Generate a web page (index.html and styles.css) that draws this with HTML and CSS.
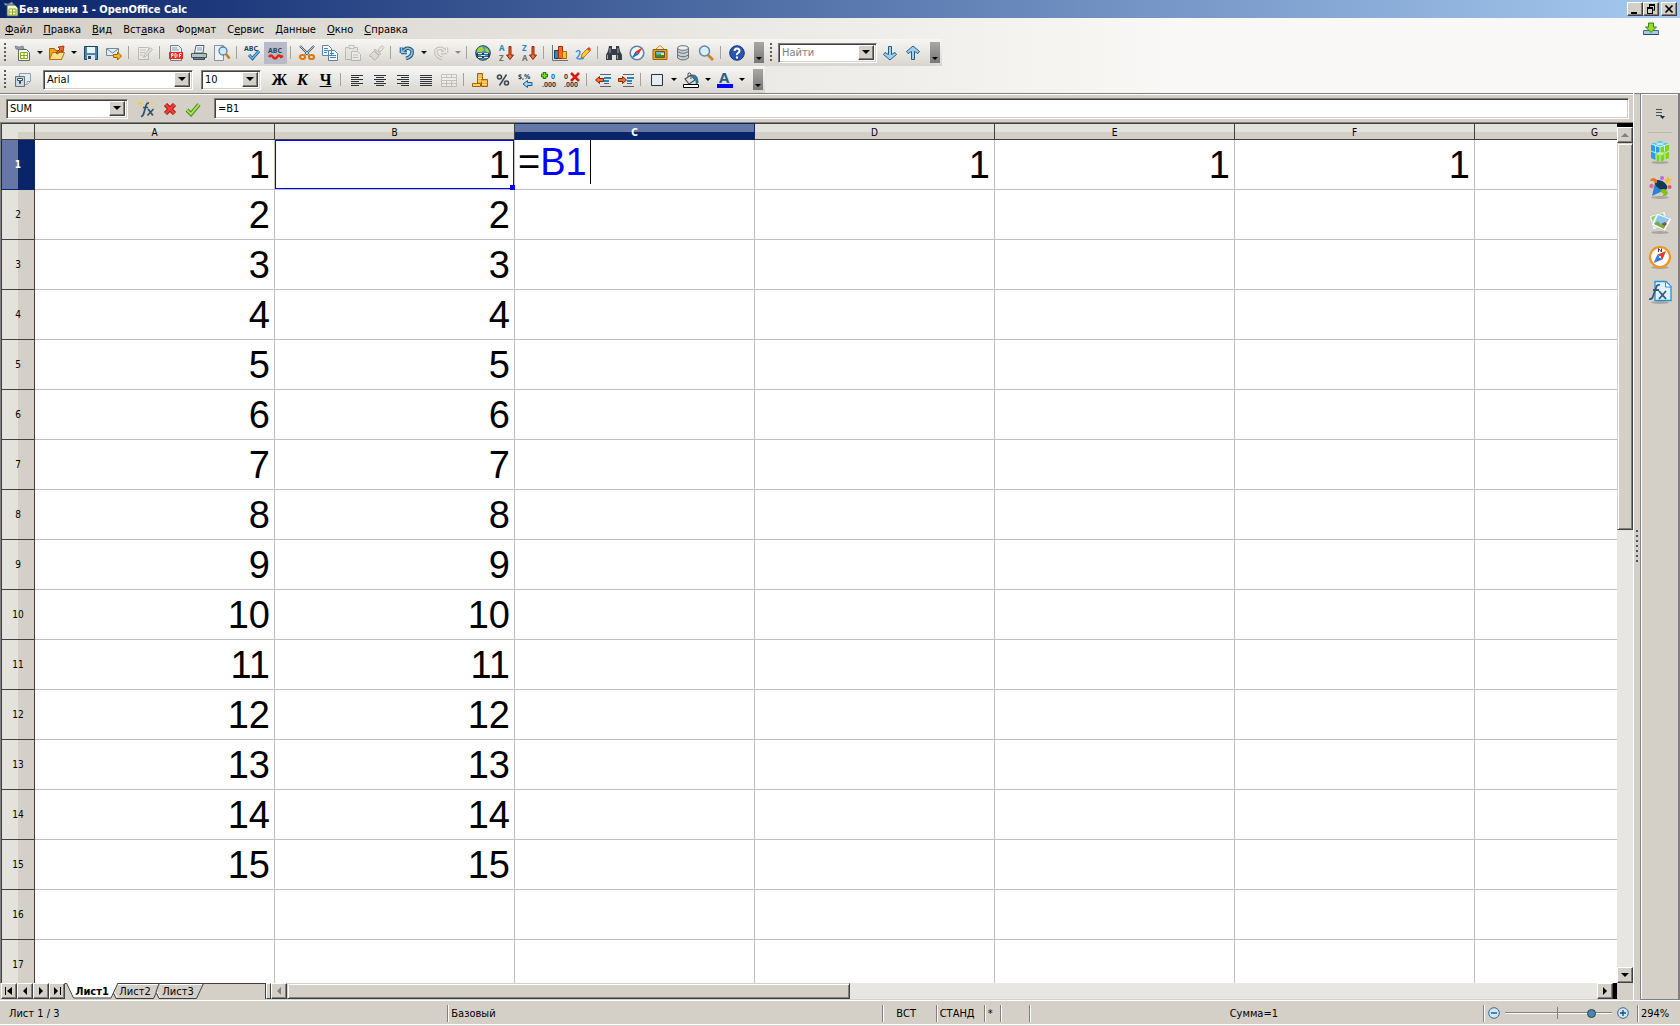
FILE: index.html
```html
<!DOCTYPE html>
<html lang="ru">
<head>
<meta charset="utf-8">
<title>Без имени 1 - OpenOffice Calc</title>
<link rel="stylesheet" href="styles.css">
</head>
<body>
<header class="titlebar">
  <svg class="icon" viewBox="0 0 16 16"><path d="M1 2l4 1 4-2 2 3-5 1-4-1z" fill="#9fb4c0" stroke="#476" stroke-width=".6"/><path d="M4 4h8l3 3v8H4z" fill="#f4f8d8" stroke="#455"/><path d="M6 8h7v6H6zM6 11h7M9.500 8v6" fill="#fff" stroke="#8ab000"/></svg>
  <h1>Без имени 1 - OpenOffice Calc</h1>
  <div class="window-buttons">
    <button class="winbtn" aria-label="Свернуть"><svg viewBox="0 0 12 10"><path d="M2 8h6v2H2z"/></svg></button>
    <button class="winbtn" aria-label="Восстановить"><svg viewBox="0 0 12 10"><path d="M4 1h6M4.500 0v4M9.500 0v6.500M8 6h2M2 4h6M2.500 4v5.500M7.500 4v5.500M2 9.500h6" fill="none" stroke="#000" /><path d="M4 0h6v2H4zM2 3h6v2H2z"/></svg></button>
    <button class="winbtn close" aria-label="Закрыть"><svg viewBox="0 0 12 10"><path d="M2.500 1.500l7 7M9.500 1.500l-7 7" stroke="#000" stroke-width="1.700"/></svg></button>
  </div>
</header>

<div class="chrome">
  <nav class="menubar">
    <button><u>Ф</u>айл</button><button><u>П</u>равка</button><button><u>В</u>ид</button><button>Вст<u>а</u>вка</button><button>Фо<u>р</u>мат</button><button>С<u>е</u>рвис</button><button><u>Д</u>анные</button><button><u>О</u>кно</button><button><u>С</u>правка</button>
    <button class="update" aria-label="Обновление"><svg class="icon" viewBox="0 0 16 16"><path d="M.5 8.500h15v4H.5z" fill="#a9c9e2" stroke="#456a8c"/><path d="M.5 12.500h15" stroke="#2d4558"/><path d="M5.500 1h5v4h3L8 10.500 2.500 5h3z" fill="#9ad82c" stroke="#2f8a10"/></svg></button>
  </nav>

  <div class="toolrow">
    <div class="toolbar">
      <i class="grip"></i>
      <button class="tool" aria-label="Создать"><svg class="icon" viewBox="0 0 16 16"><path d="M0 1l4 1 4-1 1 3-4 1-4-1z" fill="#8fa3ad" stroke="#567" stroke-width=".6"/><path d="M3.500 4.500h8l3 3v8h-11z" fill="#f6f9e4" stroke="#5a686e"/><path d="M5.500 7.500h7v6h-7zM5.500 10.500h7M9 7.500v6" fill="#fff" stroke="#85ad00"/></svg></button>
      <button class="drop" aria-label="Список"></button>
      <button class="tool" aria-label="Открыть"><svg class="icon" viewBox="0 0 16 16"><path d="M.5 14.500v-11h5l1 2h6v9z" fill="#f0a41c" stroke="#a46400"/><path d="M.5 14.500l3-7h12l-3 7z" fill="#ffe08a" stroke="#b87400"/><path d="M7 8l4-4-2-2 6-1-1 6-2-1.500L8.500 9z" fill="#f06428" stroke="#96200a" stroke-width=".8"/></svg></button>
      <button class="drop" aria-label="Список"></button>
      <button class="tool" aria-label="Сохранить"><svg class="icon" viewBox="0 0 16 16"><path d="M1.500 1.500h13v13h-13z" fill="#4787ad" stroke="#1e4560"/><path d="M4 2h8v6H4z" fill="#eef4f6"/><path d="M4 10h8v5H4z" fill="#dce6ea"/><path d="M5 11h3v3H5z" fill="#26485c"/></svg></button>
      <button class="tool" aria-label="Отправить"><svg class="icon" viewBox="0 0 16 16"><path d="M.5 3.500h12v7H.5z" fill="#e2ebf1" stroke="#748896"/><path d="M1 4l5.500 4L12 4" fill="none" stroke="#748896"/><path d="M7.500 9.500h4v-2.500l4 4-4 4v-2.500h-4z" fill="#fbb823" stroke="#a86400"/></svg></button>
      <i class="sep"></i>
      <button class="tool" disabled aria-label="Правка файла"><svg class="icon faded" viewBox="0 0 16 16"><path d="M1.500 2.500h10v12h-10z" fill="#eee" stroke="#777"/><path d="M3 5h6M3 7.500h5M3 10h3" stroke="#888"/><path d="M6.500 12.500l1-3 6-7 2 2-6 6.500z" fill="#ccc" stroke="#777"/></svg></button>
      <i class="sep"></i>
      <button class="tool" aria-label="Экспорт в PDF"><svg class="icon" viewBox="0 0 16 16"><path d="M2.500.5h8l3 3v12h-11z" fill="#e9f0f5" stroke="#697d8a"/><path d="M4 3h5M4 5h7" stroke="#8ca0b0"/><path d="M1 7h14v7H1z" fill="#e22b1c"/><path d="M3.500 12.500v-4h1.500v2H3.500M7 8.500h1l1 1v2l-1 1H7zM11.500 12.500v-4h2M11.500 10.500h1.500" fill="none" stroke="#fff"/></svg></button>
      <button class="tool" aria-label="Печать"><svg class="icon" viewBox="0 0 16 16"><path d="M3.500 8L5 .5h8L12 8z" fill="#eef5fa" stroke="#50616c"/><path d="M6 3h5M6 5h5" stroke="#849cae"/><path d="M.5 8.500h15v4H.5z" fill="#b5c1c8" stroke="#45545e"/><path d="M2.500 12.500h11v2h-11z" fill="#718089" stroke="#3c4850"/><path d="M11 10.500h3" stroke="#8ee000"/></svg></button>
      <button class="tool" aria-label="Предпросмотр"><svg class="icon" viewBox="0 0 16 16"><path d="M.5.500h9v15h-9z" fill="#eef2f6" stroke="#8292a0"/><circle cx="9" cy="6" r="4" fill="#cce8fa" stroke="#58809c" stroke-width="1.300"/><path d="M12 9l3.500 4.500" stroke="#c67d14" stroke-width="2.500"/></svg></button>
      <i class="sep"></i>
      <button class="tool" aria-label="Проверка орфографии"><svg class="icon" viewBox="0 0 16 16"><text x="-1" y="6" class="abc">ABC</text><path d="M4 10l3.500 3.500L14 6" fill="none" stroke="#185b8c" stroke-width="3"/><path d="M4 10l3.500 3.500L14 6" fill="none" stroke="#68b6ec" stroke-width="1.500"/></svg></button>
      <button class="tool pressed" aria-label="Автопроверка"><svg class="icon" viewBox="0 0 16 16"><text x="0" y="8" class="abc">ABC</text><path d="M1 12q2-3 4 0t4 0 4 0l2-1" fill="none" stroke="#e02418" stroke-width="2.500"/></svg></button>
      <i class="sep"></i>
      <button class="tool" aria-label="Вырезать"><svg class="icon" viewBox="0 0 16 16"><path d="M1 1l9 9M15 1l-9 9" stroke="#4b5c66" stroke-width="2.200"/><path d="M1 1l9 9M15 1l-9 9" stroke="#d8e2e8" stroke-width=".8"/><ellipse cx="3.500" cy="12" rx="2.500" ry="2" fill="#eee" stroke="#dc7808" stroke-width="2.200"/><ellipse cx="12.500" cy="12" rx="2.500" ry="2" fill="#eee" stroke="#dc7808" stroke-width="2.200"/></svg></button>
      <button class="tool" aria-label="Копировать"><svg class="icon" viewBox="0 0 16 16"><path d="M.5.500h6l3 3v7h-9zM6.500 5.500h6l3 3v7h-9z" fill="#f3f8fc" stroke="#6280a0"/><path d="M2 3.500h4M2 5.500h4M2 7.500h3M8 8.500h4M8 10.500h6M8 12.500h6" stroke="#3c83c0"/></svg></button>
      <button class="tool" disabled aria-label="Вставить"><svg class="icon faded" viewBox="0 0 16 16"><path d="M.5 2.500h12v12H.5z" fill="#ddd" stroke="#777"/><path d="M4 .5h5v3H4z" fill="#eee" stroke="#777"/><path d="M6.500 6.500h6l3 3v6h-9z" fill="#f4f4f4" stroke="#777"/><path d="M8 10h5M8 12.500h5" stroke="#888"/></svg></button>
      <button class="tool" disabled aria-label="Кисть"><svg class="icon faded" viewBox="0 0 16 16"><path d="M10 5l4-4.500 2 2L12 7z" fill="#ddd" stroke="#777"/><path d="M7 4l6 5-2 1-5-5zM6 6l5 5-4 4-2-1-1-2-3-1z" fill="#ccc" stroke="#777"/></svg></button>
      <i class="sep"></i>
      <button class="tool" aria-label="Отменить"><svg class="icon" viewBox="0 0 16 16"><path d="M2 7.500h6M2.500 2.500V8M3 7l4-3.500q4-1 6 2 1 6-6 8" fill="none" stroke="#1d5276" stroke-width="3.600"/><path d="M2 7.500h6M2.500 2.500V8M3 7l4-3.500q4-1 6 2 1 6-6 8" fill="none" stroke="#8cc4e6" stroke-width="1.500"/></svg></button>
      <button class="drop" aria-label="Список"></button>
      <button class="tool" disabled aria-label="Вернуть"><svg class="icon faded" viewBox="0 0 16 16"><path d="M14 7.500H8M13.500 2.500V8M13 7L9 3.500q-4-1-6 2-1 6 6 8" fill="none" stroke="#777" stroke-width="3.400"/><path d="M14 7.500H8M13.500 2.500V8M13 7L9 3.500q-4-1-6 2-1 6 6 8" fill="none" stroke="#eee" stroke-width="1.500"/></svg></button>
      <button class="drop" disabled aria-label="Список"></button>
      <i class="sep"></i>
      <button class="tool" aria-label="Гиперссылка"><svg class="icon" viewBox="0 0 16 16"><circle cx="8" cy="8" r="7.300" fill="#4f9cc8" stroke="#1d4763"/><path d="M3 3l4-1.500 2 3-3 3-4-1zM10 3l3 1 1 4-3-1z" fill="#a8d432"/><rect x="2" y="8.500" width="6" height="4" rx="2" fill="none" stroke="#26404e" stroke-width="2"/><rect x="8" y="8.500" width="6" height="4" rx="2" fill="none" stroke="#26404e" stroke-width="2"/><path d="M3 8.500h4M9 8.500h4M3 12.500h4M9 12.500h4M6 10.500h4" stroke="#d7e9ee"/></svg></button>
      <button class="tool" aria-label="Сортировка по возрастанию"><svg class="icon" viewBox="0 0 16 16"><text x="1" y="6" class="letter blue">A</text><text x="1" y="16" class="letter grey">Z</text><path d="M11 1.500h2V10h2.500L12 14.500 8.500 10H11z" fill="#f56b30" stroke="#8d2206"/></svg></button>
      <button class="tool" aria-label="Сортировка по убыванию"><svg class="icon" viewBox="0 0 16 16"><text x="1" y="6" class="letter blue">Z</text><text x="1" y="16" class="letter grey">A</text><path d="M11 1.500h2V10h2.500L12 14.500 8.500 10H11z" fill="#f56b30" stroke="#8d2206"/></svg></button>
      <i class="sep"></i>
      <button class="tool" aria-label="Диаграмма"><svg class="icon" viewBox="0 0 16 16"><path d="M.5 0v15.500H16" fill="none" stroke="#68737c"/><path d="M2.500 5.500h4v8h-4z" fill="#3486b4" stroke="#173e58"/><path d="M6.500 1.500h4v12h-4z" fill="#ff6a20" stroke="#a32600"/><path d="M10.500 6.500h4v7h-4z" fill="#ffc13c" stroke="#ad6900"/></svg></button>
      <button class="tool" aria-label="Рисование"><svg class="icon" viewBox="0 0 16 16"><path d="M1 7q3-3 4 0 0 3-3 6 3 2 7 0" fill="none" stroke="#3f92dc" stroke-width="1.600"/><path d="M6 13l1-4 6-6 2.500 2.500L9 12z" fill="#ffcb38" stroke="#a26300" stroke-width=".8"/><path d="M12 4l2-2 2 2-2 2z" fill="#e83a34"/></svg></button>
      <i class="sep"></i>
      <button class="tool" aria-label="Найти и заменить"><svg class="icon" viewBox="0 0 16 16"><path d="M3 1h3v3h4V1h3l1 5 2 4v5h-6v-5H6v5H0v-5l2-4z" fill="#363d44"/><path d="M1.500 10v4M11.500 10v4M4 3v5M12 3v5" stroke="#9aa5ae"/></svg></button>
      <button class="tool" aria-label="Навигатор"><svg class="icon" viewBox="0 0 16 16"><circle cx="8" cy="8" r="6.800" fill="#f3f8fc" stroke="#66839e" stroke-width="1.600"/><path d="M13.500 2.500L9.500 9.500 6.500 6.500z" fill="#e72d20"/><path d="M2.500 13.500l7-4-3-3z" fill="#1b6fc6"/></svg></button>
      <button class="tool" aria-label="Галерея"><svg class="icon" viewBox="0 0 16 16"><path d="M4 4l4-3.500L12 4" fill="none" stroke="#d28910"/><path d="M1 4.500h14v10H1z" fill="#eea52a" stroke="#9a5b00"/><path d="M3.500 6.500h9v6h-9z" fill="#69b4e7" stroke="#5a5634"/><path d="M4 12V9l2 1 3-1 3 1v2z" fill="#3d8d28"/><path d="M9 8h3v2H9z" fill="#f7e269"/></svg></button>
      <button class="tool" aria-label="Источники данных"><svg class="icon" viewBox="0 0 16 16"><path d="M2.500 3v10q5.500 4 11 0V3" fill="#c6ced4" stroke="#66727c"/><ellipse cx="8" cy="3" rx="5.500" ry="2.300" fill="#edf1f3" stroke="#66727c"/><path d="M2.500 6.500q5.500 3.500 11 0M2.500 10q5.500 3.500 11 0" fill="none" stroke="#66727c"/></svg></button>
      <button class="tool" aria-label="Масштаб"><svg class="icon" viewBox="0 0 16 16"><path d="M10 10l5 5" stroke="#d08215" stroke-width="2.800"/><circle cx="6.500" cy="6" r="5" fill="#d8effc" stroke="#6486a4" stroke-width="1.500"/></svg></button>
      <i class="sep"></i>
      <button class="tool" aria-label="Справка"><svg class="icon" viewBox="0 0 16 16"><circle cx="8" cy="8" r="7.300" fill="#2756ae" stroke="#163678"/><path d="M5.500 6q0-2.500 2.500-2.500T10.500 6q0 1-1.500 2T8 10M8 11.500v2" fill="none" stroke="#fff" stroke-width="2"/></svg></button>
      <button class="overflow" aria-label="Ещё"></button>
    </div>
    <div class="toolbar">
      <i class="grip"></i>
      <div class="combo find"><input type="text" placeholder="Найти" aria-label="Найти"><button class="arrow" aria-label="Список"></button></div>
      <button class="tool" aria-label="Найти далее"><svg class="icon" viewBox="0 0 16 16"><path d="M6.500 1.500h3v8l3.500-2 1.500 2L8 15 1.500 9.500 3 7.500l3.500 2z" fill="#9fcfec" stroke="#2b5d7e"/></svg></button>
      <button class="tool" aria-label="Найти ранее"><svg class="icon" viewBox="0 0 16 16"><path d="M6.500 14.500h3v-8l3.500 2 1.500-2L8 1 1.500 6.500 3 8.500l3.500-2z" fill="#9fcfec" stroke="#2b5d7e"/></svg></button>
      <button class="overflow spaced" aria-label="Ещё"></button>
    </div>
  </div>

  <div class="toolrow">
    <div class="toolbar">
      <i class="grip"></i>
      <button class="tool" aria-label="Стили"><svg class="icon" viewBox="0 0 16 16"><path d="M4.500 1.500h11v8l-3 3h-8z" fill="#e2ecf2" stroke="#91a0ab"/><path d="M15 9.500h-3v3" fill="#fff" stroke="#91a0ab"/><path d="M.5 4.500h9v10h-9z" fill="#cdd9e0" stroke="#60717d"/><path d="M2.500 6.500h5v2h-2v3h-1v-3h-2z" fill="#fff" stroke="#394b56"/></svg></button>
      <div class="combo fontname"><select aria-label="Шрифт"><option>Arial</option></select><span class="arrow"></span></div>
      <div class="combo fontsize"><select aria-label="Размер"><option>10</option></select><span class="arrow"></span></div>
      <button class="tool letterbtn">Ж</button>
      <button class="tool letterbtn italic">К</button>
      <button class="tool letterbtn under">Ч</button>
      <i class="sep"></i>
      <button class="tool" aria-label="По левому краю"><svg class="icon" viewBox="0 0 16 16"><path d="M2 3.500h12M2 5.500h8M2 7.500h12M2 9.500h8M2 11.500h12M2 13.500h8" stroke="#2b3338"/></svg></button>
      <button class="tool" aria-label="По центру"><svg class="icon" viewBox="0 0 16 16"><path d="M2 3.500h12M4 5.500h8M2 7.500h12M4 9.500h8M2 11.500h12M4 13.500h8" stroke="#2b3338"/></svg></button>
      <button class="tool" aria-label="По правому краю"><svg class="icon" viewBox="0 0 16 16"><path d="M2 3.500h12M6 5.500h8M2 7.500h12M6 9.500h8M2 11.500h12M6 13.500h8" stroke="#2b3338"/></svg></button>
      <button class="tool" aria-label="По ширине"><svg class="icon" viewBox="0 0 16 16"><path d="M2 3.500h12M2 5.500h12M2 7.500h12M2 9.500h12M2 11.500h12M2 13.500h12" stroke="#2b3338"/></svg></button>
      <button class="tool" disabled aria-label="Объединить ячейки"><svg class="icon faded" viewBox="0 0 16 16"><path d="M.5 2.500h15v12H.5zM.5 5.500h15M.5 8.500h15M.5 11.500h15M5.500 2.500v3M10.500 2.500v3M5.500 8.500v6M10.500 8.500v6" fill="#f6f6f6" stroke="#888"/></svg></button>
      <i class="sep"></i>
      <button class="tool" aria-label="Денежный формат"><svg class="icon" viewBox="0 0 16 16"><path d="M5.500 1.500h5v11h-5z" fill="#f5ac2c" stroke="#a66200"/><path d="M9.500 7.500h6v7h-6z" fill="#f5ac2c" stroke="#a66200"/><path d="M.5 11.500h8v3h-8z" fill="#ffd160" stroke="#a66200"/><path d="M6 4h4M6 6.500h4M6 9h4M10 10h5M10 12.500h5" stroke="#ffe49a"/></svg></button>
      <button class="tool" aria-label="Процентный формат"><svg class="icon" viewBox="0 0 16 16"><circle cx="4.500" cy="5" r="2" fill="none" stroke="#3b4750" stroke-width="1.600"/><circle cx="11.500" cy="11" r="2" fill="none" stroke="#3b4750" stroke-width="1.600"/><path d="M11.500 2.500l-7 11" stroke="#3b4750" stroke-width="1.500"/></svg></button>
      <button class="tool" aria-label="Стандартный формат"><svg class="icon" viewBox="0 0 16 16"><text x="0" y="7" class="abc">$,%</text><path d="M9.500 15.500L5 12l4.500-3.500v2H14v3H9.500z" fill="#9dd3f4" stroke="#1e5d87"/></svg></button>
      <button class="tool" aria-label="Добавить разряд"><svg class="icon" viewBox="0 0 16 16"><path d="M3.500 0v7M0 3.500h7" stroke="#287b0c" stroke-width="3.500"/><path d="M3.500 1v5M1 3.500h5" stroke="#7bdd2e" stroke-width="1.500"/><text x="10" y="7" class="tiny bluefill">0</text><text x="1" y="15" class="tiny">.000</text></svg></button>
      <button class="tool" aria-label="Удалить разряд"><svg class="icon" viewBox="0 0 16 16"><text x="0" y="7" class="tiny">0</text><text x="0" y="15" class="tiny">.000</text><path d="M7 1l8 8M15 1L7 9" stroke="#d31c14" stroke-width="2.500"/></svg></button>
      <i class="sep"></i>
      <button class="tool" aria-label="Уменьшить отступ"><svg class="icon" viewBox="0 0 16 16"><path d="M5 2.500h11M5 14.500h11M9 11.500h5" stroke="#59636b"/><path d="M9 6h7M9 9h5" stroke="#2186c6" stroke-width="2"/><path d="M4.500 11.500L.5 8l4-3.500v2h4v3h-4z" fill="#ef6c34" stroke="#8f2408"/></svg></button>
      <button class="tool" aria-label="Увеличить отступ"><svg class="icon" viewBox="0 0 16 16"><path d="M5 2.500h11M5 14.500h11M9 11.500h5" stroke="#59636b"/><path d="M9 6h7M9 9h5" stroke="#2186c6" stroke-width="2"/><path d="M4.500 4.500l4 3.500-4 3.500v-2H.5v-3h4z" fill="#ef6c34" stroke="#8f2408"/></svg></button>
      <i class="sep"></i>
      <button class="tool" aria-label="Обрамление"><svg class="icon" viewBox="0 0 16 16"><path d="M2.500 2.500h11v11h-11z" fill="#e4edf5" stroke="#26323a"/></svg></button>
      <button class="drop" aria-label="Список"></button>
      <button class="tool" aria-label="Цвет фона"><svg class="icon" viewBox="0 0 16 16"><path d="M9 3q6-1 6 8l-2 .5V8z" fill="#2e80b9" stroke="#204d6c" stroke-width=".7"/><path d="M2 7l6-4 4 5-6 4z" fill="#d7e1e7" stroke="#42515a" stroke-width="1.200"/><path d="M5 5V1.500q2-2 3 1V7" fill="none" stroke="#42515a"/><path d="M.5 12.500h15v3H.5z" fill="#fff" stroke="#000"/></svg></button>
      <button class="drop" aria-label="Список"></button>
      <button class="tool" aria-label="Цвет символов"><svg class="icon" viewBox="0 0 16 16"><text x="2" y="11" class="fontcolor">A</text><path d="M0 12h16v4H0z" fill="#00f"/></svg></button>
      <button class="drop" aria-label="Список"></button>
      <button class="overflow" aria-label="Ещё"></button>
    </div>
  </div>
</div>

<main class="workspace">
  <section class="document">
    <div class="formulabar">
      <div class="combo namebox"><input type="text" value="SUM" aria-label="Область листа"><button class="arrow" aria-label="Список"></button></div>
      <div class="formula-tools">
      <button class="tool" aria-label="Мастер функций"><svg class="icon" viewBox="0 0 16 16"><path d="M2 15.500q2 0 3-4l2-7Q8 1.500 10 2M4 6.500h5M9 8l5 6.500M14.500 8l-6 6.500" fill="none" stroke="#31516a" stroke-width="1.700"/><path d="M1 0v5M-1.500 2.500h5M8-.5v2M13 1v3M14.500 5h2" stroke="#ffc62e" stroke-width="1.200"/></svg></button>
      <button class="tool" aria-label="Отменить"><svg class="icon" viewBox="0 0 16 16"><path d="M3.500 3.500l9 9M12.500 3.500l-9 9" stroke="#a30e0e" stroke-width="4.500"/><path d="M3.500 3.500l9 9M12.500 3.500l-9 9" stroke="#ee4038" stroke-width="2.500"/></svg></button>
      <button class="tool" aria-label="Принять"><svg class="icon" viewBox="0 0 16 16"><path d="M2 9l4 4 8-9.500" fill="none" stroke="#3d8a12" stroke-width="4"/><path d="M2 9l4 4 8-9.500" fill="none" stroke="#a8e04c" stroke-width="2"/></svg></button>
      </div>
      <input class="formula" type="text" value="=B1" aria-label="Строка ввода">
    </div>

    <div class="sheetarea">
      <div class="grid">
        <table>
          <colgroup><col class="rowcol"><col><col><col><col><col><col><col></colgroup>
          <thead><tr><th class="corner"></th><th>A</th><th>B</th><th class="active">C</th><th>D</th><th>E</th><th>F</th><th>G</th></tr></thead>
          <tbody>
          <tr><th class="active">1</th><td>1</td><td class="ref">1<i class="handle"></i></td><td class="editing">=<span>B1</span><i class="caret"></i></td><td>1</td><td>1</td><td>1</td><td></td></tr>
          <tr><th>2</th><td>2</td><td>2</td><td></td><td></td><td></td><td></td><td></td></tr>
          <tr><th>3</th><td>3</td><td>3</td><td></td><td></td><td></td><td></td><td></td></tr>
          <tr><th>4</th><td>4</td><td>4</td><td></td><td></td><td></td><td></td><td></td></tr>
          <tr><th>5</th><td>5</td><td>5</td><td></td><td></td><td></td><td></td><td></td></tr>
          <tr><th>6</th><td>6</td><td>6</td><td></td><td></td><td></td><td></td><td></td></tr>
          <tr><th>7</th><td>7</td><td>7</td><td></td><td></td><td></td><td></td><td></td></tr>
          <tr><th>8</th><td>8</td><td>8</td><td></td><td></td><td></td><td></td><td></td></tr>
          <tr><th>9</th><td>9</td><td>9</td><td></td><td></td><td></td><td></td><td></td></tr>
          <tr><th>10</th><td>10</td><td>10</td><td></td><td></td><td></td><td></td><td></td></tr>
          <tr><th>11</th><td>11</td><td>11</td><td></td><td></td><td></td><td></td><td></td></tr>
          <tr><th>12</th><td>12</td><td>12</td><td></td><td></td><td></td><td></td><td></td></tr>
          <tr><th>13</th><td>13</td><td>13</td><td></td><td></td><td></td><td></td><td></td></tr>
          <tr><th>14</th><td>14</td><td>14</td><td></td><td></td><td></td><td></td><td></td></tr>
          <tr><th>15</th><td>15</td><td>15</td><td></td><td></td><td></td><td></td><td></td></tr>
          <tr><th>16</th><td></td><td></td><td></td><td></td><td></td><td></td><td></td></tr>
          <tr><th>17</th><td></td><td></td><td></td><td></td><td></td><td></td><td></td></tr>
          </tbody>
        </table>
      </div>
      <div class="vscroll">
        <i class="split"></i>
        <button class="scrollbtn" aria-label="Вверх"><svg viewBox="0 0 10 10"><path d="M1 7h8L5 3z" fill="#808080"/></svg></button>
        <div class="track"><div class="thumb"></div></div>
        <button class="scrollbtn" aria-label="Вниз"><svg viewBox="0 0 10 10"><path d="M1 3h8L5 7z"/></svg></button>
      </div>
    </div>

    <div class="bottombar">
      <div class="sheets">
        <button class="navbtn" aria-label="Первый лист"><svg viewBox="0 0 10 10"><path d="M1 1h1v8H1zM8 1v8L3 5z"/></svg></button>
        <button class="navbtn" aria-label="Предыдущий лист"><svg viewBox="0 0 10 10"><path d="M7 1v8L3 5z"/></svg></button>
        <button class="navbtn" aria-label="Следующий лист"><svg viewBox="0 0 10 10"><path d="M3 1v8l4-4z"/></svg></button>
        <button class="navbtn" aria-label="Последний лист"><svg viewBox="0 0 10 10"><path d="M2 1v8l4-4zM8 1h1v8H8z"/></svg></button>
        <div class="tabs">
          <button class="tab current"><svg viewBox="0 0 52 16"><path d="M0 0l7 15h38l7-15z" fill="#fff"/><path d="M.5 0l7 15H45l7-15" fill="none" stroke="#404040"/></svg><span>Лист1</span></button>
          <button class="tab"><svg viewBox="0 0 52 16"><path d="M7 .5h44.500l-7 15H7L4 9z" fill="#d4d0c8" stroke="#404040"/><path d="M8 1.500h42M5 9l3 5" stroke="#fff"/></svg><span>Лист2</span></button>
          <button class="tab"><svg viewBox="0 0 52 16"><path d="M7 .5h44.500l-7 15H7L4 9z" fill="#d4d0c8" stroke="#404040"/><path d="M8 1.500h42M5 9l3 5" stroke="#fff"/></svg><span>Лист3</span></button>
        </div>
      </div>
      <i class="hsplit"></i>
      <div class="hscroll">
        <button class="scrollbtn" aria-label="Влево"><svg viewBox="0 0 10 10"><path d="M7 1v8L3 5z" fill="#808080"/></svg></button>
        <div class="track"><div class="thumb"></div></div>
        <button class="scrollbtn" aria-label="Вправо"><svg viewBox="0 0 10 10"><path d="M3 1v8l4-4z"/></svg></button>
        <i class="split"></i>
      </div>
      <i class="sizebox"></i>
    </div>
  </section>

  <div class="panel-splitter"><i class="dots"></i></div>

  <aside class="sidebar">
    <button class="side menu" aria-label="Настройки"><svg viewBox="0 0 24 24"><path d="M8 8.500h6M8 11.500h6M8 14.500h6" stroke="#44505e"/><path d="M12 15h5l-2.500 3z" fill="#1d2a44"/></svg></button>
    <button class="side" aria-label="Свойства"><svg viewBox="0 0 24 24"><ellipse cx="12" cy="22.500" rx="9" ry="1.500" fill="#aaa69f"/><path d="M12 1l9 3v14l-9 4-9-4V4z" fill="#7ed321"/><path d="M3 4l9 3v6l-4 1v6l-5-2z" fill="#2b9df0"/><path d="M12 1l9 3-9 3-9-3z" fill="#5cc8f4"/><path d="M8 14l4-2 5 2-5 2z" fill="#b9f05c"/><path d="M3 4l9 3 9-3M12 7v5M3 11l5 2 9 0 4-2M7.500 2.500l9 3v6M7.500 5.500v8M16.500 2.500l-9 3M8 14v6M12 16v6M17 14v6" fill="none" stroke="#e5f7ff" stroke-width=".8"/></svg></button>
    <button class="side" aria-label="Стили"><svg viewBox="0 0 24 24"><ellipse cx="12" cy="22.500" rx="9" ry="1.500" fill="#aaa69f"/><path d="M4 21l3-13 12 6z" fill="#2c83d4"/><ellipse cx="13" cy="10" rx="7" ry="4" transform="rotate(32 13 10)" fill="#103a58"/><path d="M2 5q3-4 7 0v3H7Q6 5 3 6z" fill="#e2751a"/><path d="M12 15q6-3 8 3-2 4-6 3 3-2 0-3z" fill="#8abb24"/><circle cx="14" cy="3" r="2" fill="#ba68df"/><circle cx="3.500" cy="11" r="2.200" fill="#eb659e"/><circle cx="21.500" cy="12" r="2" fill="#ee5368"/><path d="M20 1l1 2.500 3 .5-2 2 .5 3-2.500-1.500L17.500 9l.5-3-2-2 3-.5z" fill="#f8bc33"/></svg></button>
    <button class="side" aria-label="Галерея"><svg viewBox="0 0 24 24"><ellipse cx="12" cy="22.500" rx="9" ry="1.500" fill="#aaa69f"/><path d="M1 6L17 1l4 14L5 20z" fill="#f6f6f2" stroke="#bbb" stroke-width=".7"/><path d="M3 7l12-4 1 4L5 12z" fill="#8bd84e"/><path d="M9 3l15 6-7 12L3 15z" fill="#fff" stroke="#b8c0c4" stroke-width=".7"/><path d="M10 5l11 4-5 9L6 14z" fill="#8ac8f4"/><path d="M6 14l4-3 3 4 5-2-2 6z" fill="#76ad35"/><path d="M13 14l4-2 2 2-2 2z" fill="#96522b"/></svg></button>
    <button class="side" aria-label="Навигатор"><svg viewBox="0 0 24 24"><ellipse cx="12" cy="22.500" rx="9" ry="1.500" fill="#aaa69f"/><circle cx="12" cy="12" r="10" fill="#fff" stroke="#f2951e" stroke-width="2.200"/><path d="M10.500 7V3.500l3 3.500V3.500" fill="none" stroke="#444"/><path d="M18 6l-3.500 8.500-5-5z" fill="#dd3c37"/><path d="M5.500 18l4-8.500 5 5z" fill="#3a7cce"/><circle cx="12" cy="12" r="1" fill="#fff"/></svg></button>
    <button class="side" aria-label="Функции"><svg viewBox="0 0 24 24"><ellipse cx="12" cy="22.500" rx="9" ry="1.500" fill="#aaa69f"/><path d="M7 1.500h11l5 5v14H7z" fill="#dff1fd" stroke="#1f96dc" stroke-width="1.300"/><path d="M17.500 2v5H23" fill="#fff" stroke="#1f96dc"/><path d="M1 19q3 1 4.500-4L8 8q1-4 4-3M5 10h6M11 11l7 8M18 11l-7 8" fill="none" stroke="#36557f" stroke-width="1.800"/></svg></button>
  </aside>
</main>

<footer class="statusbar">
  <span class="sheetno">Лист 1 / 3</span>
  <span class="pagestyle">Базовый</span>
  <span class="insert">ВСТ</span>
  <span class="selmode">СТАНД</span>
  <span class="modified">*</span>
  <span class="signature"></span>
  <span class="sum">Сумма=1</span>
  <div class="zoom">
    <button aria-label="Уменьшить"><svg viewBox="0 0 12 12"><circle cx="6" cy="6" r="5.300" fill="#cfe6fa" stroke="#3d6a94"/><path d="M3 6h6" stroke="#174a7c" stroke-width="1.300"/></svg></button>
    <input type="range" min="0" max="100" value="84" aria-label="Масштаб">
    <button aria-label="Увеличить"><svg viewBox="0 0 12 12"><circle cx="6" cy="6" r="5.300" fill="#cfe6fa" stroke="#3d6a94"/><path d="M3 6h6M6 3v6" stroke="#174a7c" stroke-width="1.300"/></svg></button>
  </div>
  <span class="percent">294%</span>
</footer>
</body>
</html>
```
FILE: styles.css
```css
:root {
  --face: #d4d0c8;
  --light: #e3e2dc;
  --track: #e8e6e2;
  --shadow: #808080;
  --dark: #404040;
  --navy: #0a246a;
}

* { box-sizing: border-box; }

body {
  margin: 0;
  height: 100vh;
  display: flex;
  flex-direction: column;
  overflow: hidden;
  background: var(--face);
  color: #000;
  font: 11px/14px "DejaVu Sans Condensed", "DejaVu Sans", sans-serif;
}

button, input, select {
  margin: 0;
  padding: 0;
  border: 0;
  border-radius: 0;
  background: none;
  color: inherit;
  font: inherit;
}

input:focus, select:focus { outline: none; }

svg { display: block; }
.icon { width: 16px; height: 16px; overflow: visible; }

/* Title bar */
.titlebar {
  flex: none;
  display: flex;
  align-items: center;
  height: 18px;
  padding: 0 3px 0 3px;
  background: linear-gradient(90deg, var(--navy), #a6caf0);
  color: #fff;
}
.titlebar h1 { flex: 1; margin: 0; padding-top: 2px; font-size: 11px; font-weight: bold; }
.window-buttons { display: flex; }
.winbtn {
  width: 16px;
  height: 14px;
  padding: 0 0 0 1px;
  background: var(--face);
  border: 1px solid;
  border-color: #fff var(--dark) var(--dark) #fff;
  box-shadow: inset -1px -1px var(--shadow);
}
.winbtn.close { margin-left: 2px; }
.winbtn svg { width: 12px; height: 10px; }

/* Menu and toolbars */
.chrome {
  flex: none;
  padding-top: 1px;
  background: linear-gradient(90deg, var(--face), #f9f8f6 70%);
}
.menubar { display: flex; align-items: center; height: 20px; padding: 1px 21px 0 0; }
.menubar button { padding: 0 5px 0 6px; }
.menubar button:first-child { padding-left: 5px; }
.menubar .update { margin-left: auto; padding: 0; }

.toolrow { display: flex; height: 27px; }
.toolbar {
  display: flex;
  align-items: center;
  height: 27px;
  padding-right: 2px;
  background: linear-gradient(#f7f6f4, #e9e7e3 50%, #d8d5cf);
}
.grip {
  width: 11px;
  height: 19px;
  background: repeating-linear-gradient(#5c5c5c 0 2px, transparent 2px 4px) 4px 0 / 2px 100% no-repeat;
}
.tool {
  flex: none;
  display: flex;
  align-items: center;
  justify-content: center;
  width: 23px;
  height: 22px;
}
.pressed { background: #b9bac8; }
.faded { opacity: .4; }
.drop { position: relative; width: 11px; height: 22px; }
.drop::after, .arrow::after, .overflow::after {
  content: "";
  display: block;
  width: 0;
  margin: 0 auto;
  border: solid transparent;
  border-width: 4px 4px 0;
  border-top-color: #000;
}
.drop::after, .overflow::after { border-width: 3px 3px 0; }
.drop:disabled::after { border-top-color: #888; }
.sep {
  width: 8px;
  height: 13px;
  background: linear-gradient(#a5a29c, #a5a29c) 3px 0 / 1px 100% no-repeat;
}
.overflow {
  display: flex;
  align-items: flex-end;
  width: 10px;
  height: 21px;
  margin-left: 6px;
  padding-bottom: 3px;
  background: linear-gradient(#a8a8a6, #777);
}

.abc { font: bold 7px "Noto Sans", sans-serif; fill: #2c4654; }
.letter { font: bold 8px "Noto Sans", sans-serif; }
.blue { fill: #1d87cd; }
.grey { fill: #657077; }
.tiny { font: bold 7px "Noto Sans", sans-serif; fill: #36444e; }
.bluefill { fill: #2469c8; }
.fontcolor { font: bold 15px "Noto Sans", sans-serif; fill: #2f5d80; }

.letterbtn { font: bold 16px/20px "Liberation Serif", serif; }
.italic { font-style: italic; }
.under { text-decoration: underline; }

.combo {
  display: grid;
  grid-template-columns: 1fr 16px;
  height: 20px;
  background: #fff;
  border: 1px solid;
  border-color: var(--shadow) #fff #fff var(--shadow);
  box-shadow: inset 1px 1px var(--dark), inset -1px -1px var(--face);
  padding: 1px 2px 2px 1px;
}
.combo input, .combo select {
  grid-area: 1 / 1 / 2 / 3;
  width: 100%;
  min-width: 0;
  padding: 1px 0 0 2px;
  appearance: none;
}
.combo .arrow {
  grid-area: 1 / 2;
  display: flex;
  align-items: center;
  pointer-events: none;
}
.arrow, .scrollbtn, .navbtn {
  background: var(--face);
  border: 1px solid;
  border-color: #fff var(--dark) var(--dark) #fff;
  box-shadow: inset -1px -1px var(--shadow);
}
.find { width: 99px; margin: 0 1px; }
.find input::placeholder { color: #808080; opacity: 1; }
.fontname { width: 150px; margin-left: 9px; }
.fontsize { width: 60px; margin: 0 7px 0 8px; }

/* Document area */
.workspace { flex: 1; min-height: 0; display: flex; }
.document {
  flex: 1;
  min-width: 0;
  display: flex;
  flex-direction: column;
  border-right: 1px solid #fff;
}
.formulabar {
  flex: none;
  display: flex;
  align-items: center;
  height: 30px;
  padding: 1px 4px 0 6px;
  border-top: 1px solid var(--shadow);
  border-bottom: 1px solid var(--shadow);
  box-shadow: inset 0 1px #fff;
}
.namebox { width: 122px; }
.formula-tools { display: flex; padding: 0 10px 0 7px; }
.formula {
  flex: 1;
  min-width: 0;
  height: 21px;
  padding: 0 3px 1px;
  background: #fff;
  border: 1px solid;
  border-color: var(--shadow) #fff #fff var(--shadow);
  box-shadow: inset 1px 1px var(--dark), inset -1px -1px var(--face);
}

.sheetarea { flex: 1; min-height: 0; display: flex; }
.grid {
  flex: 1;
  min-width: 0;
  overflow: hidden;
  background: #fff;
  border-left: 1px solid var(--shadow);
}
table { width: 1714px; table-layout: fixed; border-collapse: separate; border-spacing: 0; }
col { width: 240px; }
.rowcol { width: 34px; }
th {
  padding: 0;
  font-size: 10px;
  line-height: 12px;
  font-weight: normal;
  border-right: 1px solid var(--dark);
  border-bottom: 1px solid var(--dark);
}
thead th {
  height: 17px;
  padding-top: 2px;
  border-top: 1px solid var(--dark);
  background: linear-gradient(var(--light) 50%, var(--face) 50%);
}
tbody th, .corner { border-left: 1px solid var(--dark); }
tbody th { background: linear-gradient(90deg, var(--light) 50%, var(--face) 50%); }
thead .active { background: linear-gradient(#6677a5 50%, var(--navy) 50%); }
tbody .active { background: linear-gradient(90deg, #6677a5 50%, var(--navy) 50%); }
th.active { color: #fff; font-weight: bold; border-color: var(--navy); }
thead .corner { background: linear-gradient(var(--face), var(--face)) 100% 100% / 50% 50% no-repeat var(--light); }
td {
  height: 50px;
  padding: 0 4px 0 3px;
  border-right: 1px solid silver;
  border-bottom: 1px solid silver;
  font: 38px/48px "Liberation Sans", Arial, sans-serif;
  text-align: right;
}
.ref { position: relative; box-shadow: inset 0 0 0 1px #00f; }
.handle { position: absolute; right: -1px; bottom: -1px; width: 5px; height: 5px; background: #00f; }
.editing { padding-bottom: 5px; line-height: 44px; text-align: left; }
.editing span { color: #00f; }
.caret { display: inline-block; width: 1px; height: 44px; margin-left: 3px; vertical-align: top; background: #000; }

/* Scroll bars */
.vscroll { display: flex; flex-direction: column; width: 16px; background: var(--track); }
.vscroll .split { height: 4px; background: #000; }
.scrollbtn { flex: none; width: 16px; height: 16px; }
.scrollbtn svg { width: 10px; height: 10px; margin: 0 auto; }
.track { flex: 1; min-width: 0; background: var(--track); }
.thumb {
  background: var(--face);
  border: 1px solid;
  border-color: var(--face) var(--dark) var(--dark) var(--face);
  box-shadow: inset 1px 1px #fff, inset -1px -1px var(--shadow);
}
.vscroll .thumb { height: 47%; }

.bottombar { flex: none; display: flex; height: 17px; border-bottom: 1px solid var(--face); }
.sheets { flex: none; display: flex; width: 266px; padding-left: 1px; border-right: 1px solid var(--dark); }
.navbtn { width: 16px; height: 16px; }
.navbtn svg { width: 10px; height: 10px; margin: 0 auto; }
.tabs { flex: 1; display: flex; padding-left: 1px; border-top: 1px solid var(--dark); }
.tab { display: grid; width: 52px; height: 16px; margin: -1px -9px 0 0; }
.tab.current { z-index: 1; }
.tab svg { grid-area: 1 / 1; width: 52px; height: 16px; }
.tab span { grid-area: 1 / 1; z-index: 1; line-height: 17px; }
.current span { font-weight: bold; }
.hsplit {
  width: 5px;
  background: var(--face);
  border: 1px solid;
  border-color: #fff var(--dark) var(--dark) #fff;
}
.hscroll { flex: 1; min-width: 0; display: flex; }
.hscroll .thumb { width: 43%; height: 16px; }
.hscroll .split { width: 4px; background: #000; }
.sizebox { width: 16px; }

.panel-splitter { display: flex; align-items: center; width: 6px; border-left: 1px solid var(--face); border-top: 1px solid var(--shadow); }
.dots { width: 3px; height: 34px; background: repeating-linear-gradient(#555 0 2px, transparent 2px 5px) 1px 0 / 2px 100% no-repeat; }

.sidebar {
  flex: none;
  display: flex;
  flex-direction: column;
  align-items: center;
  width: 40px;
  padding-top: 7px;
  border: solid var(--shadow);
  border-width: 1px 2px 1px 1px;
  box-shadow: inset 1px 1px #fff;
}
.side { width: 24px; height: 35px; }
.side svg { width: 24px; height: 24px; margin: 0 auto; }
.side.menu { height: 32px; margin-bottom: 1px; padding-bottom: 8px; border-bottom: 1px solid #bbb7b0; }

/* Status bar */
.statusbar {
  flex: none;
  display: flex;
  align-items: center;
  height: 26px;
  padding-bottom: 1px;
  background: linear-gradient(#fff, #fff) 0 23px / 100% 1px no-repeat;
  border-top: 1px solid #fff;
}
.statusbar > * {
  height: 17px;
  padding-left: 3px;
  border-left: 1px solid var(--shadow);
  box-shadow: inset 1px 0 #fff;
  line-height: 17px;
  white-space: nowrap;
}
.statusbar .sheetno { flex: 440 0 0; padding-left: 9px; border: 0; box-shadow: none; }
.pagestyle { flex: 432 0 0; }
.insert { width: 54px; text-align: center; }
.statusbar .insert { padding: 0 6px 0 0; }
.selmode { width: 48px; }
.modified { width: 16px; }
.signature { width: 29px; }
.sum { flex: 450 0 0; text-align: center; }
.statusbar .sum { padding: 0 5px 0 0; }
.zoom { display: flex; align-items: center; width: 154px; gap: 5px; }
.statusbar .zoom { padding-left: 4px; }
.zoom svg { width: 12px; height: 12px; }
.zoom input {
  width: 107px;
  height: 12px;
  appearance: none;
  background:
    linear-gradient(var(--shadow), var(--shadow)) 52px 0 / 1px 12px no-repeat,
    linear-gradient(var(--shadow) 50%, #fff 50%) 0 5px / 100% 2px no-repeat;
}
.zoom input::-webkit-slider-thumb {
  appearance: none;
  width: 9px;
  height: 9px;
  border: 1px solid #23455f;
  border-radius: 50%;
  background: #4f86ac;
}
.percent { width: 43px; }
```
